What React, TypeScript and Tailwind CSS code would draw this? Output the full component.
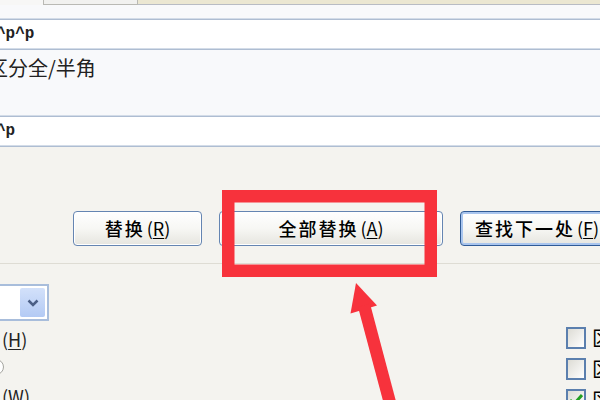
import React from "react";

const cjk = "font-['Noto_Sans_CJK_SC','Liberation_Sans',sans-serif]";

function XpButton({ label, hotkey, width, primary }: { label: string; hotkey: string; width: string; primary?: boolean }) {
  return (
    <button
      className={`${width} h-[35px] shrink-0 rounded-[4px] border bg-gradient-to-b from-white via-[#f7f7f4] to-[#e6e5df] text-[18px] text-black flex items-center ${
        primary
          ? "border-[#2f5a96] shadow-[inset_0_0_0_2px_#a9c5ee] justify-start pl-[14px]"
          : "border-[#6585b2] shadow-[inset_0_0_0_1px_#ffffff] justify-center"
      }`}
    >
      <span className="tracking-[2px] font-medium">{label}</span>
      <span className="ml-[2px]">
        (<span className="underline underline-offset-2">{hotkey}</span>)
      </span>
    </button>
  );
}

function Checkbox({ checked }: { checked?: boolean }) {
  return (
    <div className="flex items-center gap-[6px]">
      <div className="w-[20px] h-[22px] border-2 border-[#5b7fae] bg-gradient-to-br from-[#dddcd5] to-white flex items-center justify-center">
        {checked && (
          <svg width="14" height="12" viewBox="0 0 14 12">
            <path d="M1 6 L5 10 L13 1" stroke="#22a022" strokeWidth="3" fill="none" />
          </svg>
        )}
      </div>
      <span className="text-[20px] text-black leading-none">区分</span>
    </div>
  );
}

function Divider() {
  return <div className="h-[2px] bg-[#aebdd2] border-t border-[#d3dce8]" />;
}

export default function App() {
  return (
    <div className={`relative w-[600px] h-[400px] overflow-hidden bg-[#f4f3ef] ${cjk}`}>
      {/* tab strip */}
      <div className="flex h-[5px]">
        <div className="w-[43px] bg-[#f7f7f6]" />
        <div className="w-[95px] bg-[#f1f1ef] border-x border-b border-[#b9b9b4]" />
        <div className="flex-1 bg-[#ebe7d2] border-b border-[#b8bcc4]" />
      </div>
      <div className="h-[13px] bg-[#f8f9fb]" />
      <Divider />
      <div className="h-[28px] bg-white flex items-center">
        <span className="-ml-[4px] font-['Liberation_Mono',monospace] font-bold text-[16px] text-[#222]">^p^p</span>
      </div>
      <Divider />
      <div className="h-[65px] bg-[#f8f9fb] pt-[6px]">
        <span className="-ml-[12px] block text-[20px] leading-[24px] text-[#222]">区分全/半角</span>
      </div>
      <Divider />
      <div className="h-[28px] bg-white flex items-center">
        <span className="-ml-[4px] font-['Liberation_Mono',monospace] font-bold text-[16px] text-[#222]">^p</span>
      </div>
      <Divider />

      {/* buttons */}
      <div className="flex mt-[64px] pl-[73px] gap-[17px]">
        <XpButton label="替换" hotkey="R" width="w-[129px]" />
        <XpButton label="全部替换" hotkey="A" width="w-[224px]" />
        <XpButton label="查找下一处" hotkey="F" width="w-[162px]" primary />
      </div>
      <div className="mt-[17px] h-px bg-[#dedcd4]" />

      {/* lower options */}
      <div className="flex justify-between">
        <div className="flex flex-col">
          <div className="mt-[20px] w-[49px] h-[37px] border-2 border-l-0 border-[#a8bddb] bg-white flex items-center justify-end pr-[2px]">
            <div className="w-[25px] h-[29px] rounded-[2px] bg-gradient-to-b from-[#d3e1fa] to-[#b3caf4] flex items-center justify-center">
              <svg width="12" height="8" viewBox="0 0 12 8">
                <path d="M1.5 1.5 L6 6 L10.5 1.5" stroke="#4b5f86" strokeWidth="2.5" fill="none" />
              </svg>
            </div>
          </div>
          <div className="mt-[8px] text-[18px] leading-[20px] text-[#222] pl-[2px]">
            (<span className="underline underline-offset-2">H</span>)
          </div>
          <div className="mt-[10px] -ml-[12px] w-[16px] h-[16px] rounded-full border border-[#a5a5a0] bg-white" />
          <div className="mt-[11px] text-[18px] leading-[20px] text-[#222] pl-[2px]">
            (<span className="underline underline-offset-2">W</span>)
          </div>
        </div>
        <div className="flex flex-col gap-[9px] mt-[63px] w-[34px] overflow-hidden">
          <div className="w-[100px]"><Checkbox /></div>
          <div className="w-[100px]"><Checkbox /></div>
          <div className="w-[100px]"><Checkbox checked /></div>
        </div>
      </div>

      {/* annotation */}
      <svg className="absolute inset-0 pointer-events-none" width="600" height="400" viewBox="0 0 600 400">
        <rect x="228.25" y="196.25" width="202.5" height="74.5" fill="none" stroke="#f7323c" strokeWidth="12.5" />
        <polygon points="356,283 350.5,313.5 377,305.5" fill="#f7323c" />
        <polygon points="358,307 370,303.5 398,409 386,412" fill="#f7323c" />
      </svg>
    </div>
  );
}
